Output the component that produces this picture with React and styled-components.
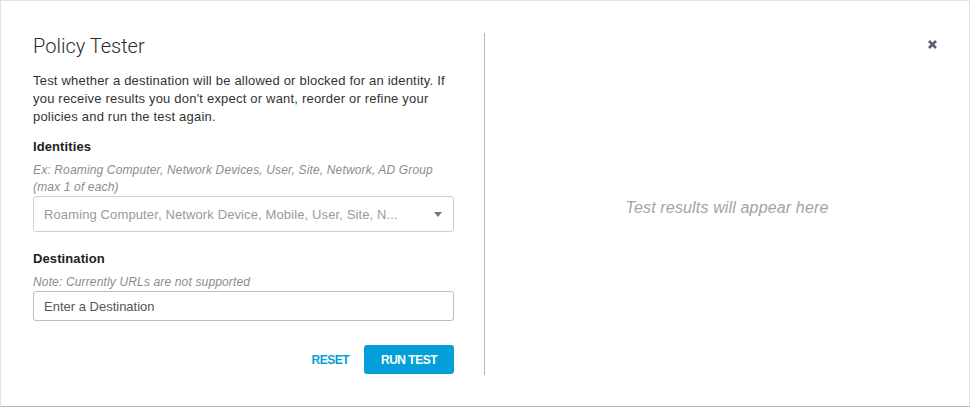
import React from 'react';
import styled, { createGlobalStyle } from 'styled-components';

const GlobalStyle = createGlobalStyle`
  html, body {
    margin: 0;
    padding: 0;
    background: #ffffff;
  }
  body {
    font-family: "Liberation Sans", Arial, sans-serif;
    color: #333333;
  }
  * {
    box-sizing: border-box;
  }
`

const Modal = styled.div`
  position: relative;
  width: 970px;
  height: 407px;
  display: flex;
  align-items: stretch;
  padding: 32px 0 31px 32px;
  background: #ffffff;
  border: 1px solid #e2e2e2;
  border-bottom-color: #b8b8b8;
`

const FormColumn = styled.div`
  width: 421px;
  flex-shrink: 0;
  display: flex;
  flex-direction: column;
`

const Divider = styled.div`
  width: 1px;
  margin-left: 30px;
  background: #b9b9b9;
`

const ResultPanel = styled.div`
  flex: 1;
  display: flex;
  align-items: center;
  justify-content: center;
  padding-top: 8px;
`

const Placeholder = styled.div`
  font-size: 16px;
  font-style: italic;
  letter-spacing: 0.15px;
  color: #a3a3a3;
`

const Title = styled.h1`
  margin: 0;
  font-family: Roboto, "Liberation Sans", Arial, sans-serif;
  font-weight: 300;
  font-size: 20px;
  line-height: 26px;
  color: #2b2b2b;
`

const Intro = styled.p`
  margin: 13px 0 0;
  font-size: 13px;
  line-height: 18px;
  letter-spacing: 0.2px;
  color: #333333;
`

const Label = styled.div`
  margin-top: ${p => p.$top}px;
  font-size: 13px;
  font-weight: bold;
  line-height: 18px;
  letter-spacing: 0.1px;
  color: #222222;
`

const Hint = styled.div`
  margin-top: 6px;
  font-size: 12px;
  font-style: italic;
  line-height: 17px;
  letter-spacing: 0.15px;
  color: #8c8c8c;
`

const SelectBox = styled.div`
  height: 36px;
  display: flex;
  align-items: center;
  padding: 0 11px 0 10px;
  border: 1px solid #cfcfcf;
  border-radius: 3px;
`

const SelectText = styled.span`
  flex: 1;
  font-size: 13px;
  letter-spacing: 0.12px;
  color: #9a9a9a;
  white-space: nowrap;
  overflow: hidden;
`

const Caret = styled.span`
  width: 0;
  height: 0;
  border-left: 4.5px solid transparent;
  border-right: 4.5px solid transparent;
  border-top: 5px solid #777777;
`

const TextInput = styled.input`
  height: 30px;
  width: 100%;
  padding: 0 10px;
  border: 1px solid #bdbdbd;
  border-radius: 3px;
  font-family: "Liberation Sans", Arial, sans-serif;
  font-size: 13px;
  color: #555555;
  outline: none;

  &::placeholder {
    color: #555555;
  }
`

const Actions = styled.div`
  margin-top: 24px;
  display: flex;
  justify-content: flex-end;
  align-items: center;
  gap: 15px;
`

const Button = styled.button`
  height: 29px;
  padding: 0 ${p => (p.$primary ? 17 : 0)}px;
  border: none;
  border-radius: 3px;
  background: ${p => (p.$primary ? '#049fd9' : 'transparent')};
  color: ${p => (p.$primary ? '#ffffff' : '#049fd9')};
  font-family: "Liberation Sans", Arial, sans-serif;
  font-size: 12px;
  font-weight: bold;
  letter-spacing: -0.5px;
  text-transform: uppercase;
  cursor: pointer;
`

const CloseButton = styled.button`
  position: absolute;
  top: 38px;
  right: 31px;
  width: 11px;
  height: 11px;
  padding: 0;
  border: none;
  background: none;
  display: flex;
  cursor: pointer;
`

const CloseIcon = () => (
  <svg width="11" height="11" viewBox="0 0 11 11">
    <path d="M2 2 L9 9 M9 2 L2 9" stroke="#5e6070" strokeWidth="2.6" strokeLinecap="butt" />
  </svg>
)

const App = () => {
  return (
    <>
      <GlobalStyle />
      <Modal>
        <FormColumn>
          <Title>Policy Tester</Title>
          <Intro>
            Test whether a destination will be allowed or blocked for an identity. If
            you receive results you don't expect or want, reorder or refine your
            policies and run the test again.
          </Intro>
          <Label $top={12}>Identities</Label>
          <Hint>Ex: Roaming Computer, Network Devices, User, Site, Network, AD Group (max 1 of each)</Hint>
          <SelectBox>
            <SelectText>Roaming Computer, Network Device, Mobile, User, Site, N...</SelectText>
            <Caret />
          </SelectBox>
          <Label $top={18}>Destination</Label>
          <Hint>Note: Currently URLs are not supported</Hint>
          <TextInput placeholder="Enter a Destination" />
          <Actions>
            <Button>Reset</Button>
            <Button $primary>Run Test</Button>
          </Actions>
        </FormColumn>
        <Divider />
        <ResultPanel>
          <Placeholder>Test results will appear here</Placeholder>
        </ResultPanel>
        <CloseButton aria-label="Close">
          <CloseIcon />
        </CloseButton>
      </Modal>
    </>
  );
}

export default App
